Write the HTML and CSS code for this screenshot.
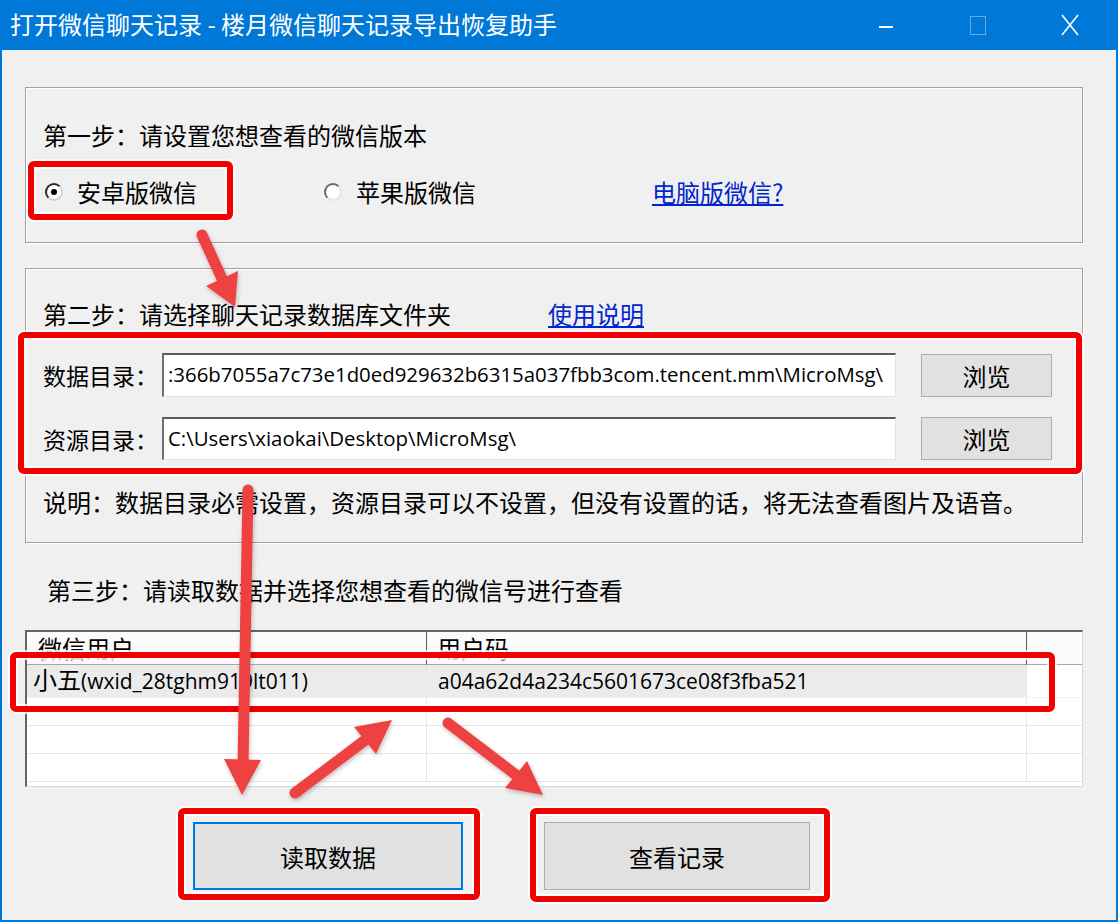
FILE: index.html
```html
<!DOCTYPE html>
<html>
<head>
    <meta charset="utf-8">
    <link rel="stylesheet" href="styles.css">
</head>
<body>
    <div class="window">
        <div class="titlebar">
            <span class="title">打开微信聊天记录 - 楼月微信聊天记录导出恢复助手</span>
            <div class="caption-buttons">
                <span class="cap"><i class="cap-min"></i></span>
                <span class="cap"><i class="cap-max"></i></span>
                <span class="cap">
                    <svg width="20" height="22" viewBox="0 0 20 22"><path d="M2 1 L18 21 M18 1 L2 21" stroke="#fff" stroke-width="1.6" fill="none"/></svg>
                </span>
            </div>
        </div>

        <div class="client">
            <div class="group group-version">
                <div class="step-title">第一步：请设置您想查看的微信版本</div>
                <div class="radio-row">
                    <label class="radio radio-android"><span class="radio-dot checked"></span>安卓版微信</label>
                    <label class="radio radio-ios"><span class="radio-dot"></span>苹果版微信</label>
                    <a class="link" href="#">电脑版微信?</a>
                </div>
            </div>

            <div class="group group-folder">
                <div class="step-head">
                    <span class="step-title step-title-wide">第二步：请选择聊天记录数据库文件夹</span>
                    <a class="link" href="#">使用说明</a>
                </div>
                <div class="field field-data">
                    <span class="field-label">数据目录：</span>
                    <div class="edit">:366b7055a7c73e1d0ed929632b6315a037fbb3com.tencent.mm\MicroMsg\</div>
                    <button class="btn-browse">浏览</button>
                </div>
                <div class="field field-res">
                    <span class="field-label">资源目录：</span>
                    <div class="edit">C:\Users\xiaokai\Desktop\MicroMsg\</div>
                    <button class="btn-browse">浏览</button>
                </div>
                <div class="note">说明：数据目录必需设置，资源目录可以不设置，但没有设置的话，将无法查看图片及语音。</div>
            </div>

            <div class="step3">第三步：请读取数据并选择您想查看的微信号进行查看</div>

            <div class="list">
                <div class="list-row list-header">
                    <div class="cell head-user">微信用户</div>
                    <div class="cell head-code">用户码</div>
                    <div class="cell cell-fill"></div>
                </div>
                <div class="list-row row-selected">
                    <div class="cell cell-user"><span class="cjk">小五</span>(wxid_28tghm919lt011)</div>
                    <div class="cell cell-code">a04a62d4a234c5601673ce08f3fba521</div>
                    <div class="cell cell-fill"></div>
                </div>
                <div class="list-row row-empty">
                    <div class="cell"></div><div class="cell"></div><div class="cell cell-fill"></div>
                </div>
                <div class="list-row row-empty">
                    <div class="cell"></div><div class="cell"></div><div class="cell cell-fill"></div>
                </div>
                <div class="list-row row-empty">
                    <div class="cell"></div><div class="cell"></div><div class="cell cell-fill"></div>
                </div>
            </div>

            <div class="actions">
                <button class="btn-big btn-read">读取数据</button>
                <button class="btn-big btn-view">查看记录</button>
            </div>
        </div>

        <!-- annotation layer: red boxes and arrows drawn over the dialog -->
        <svg class="marks" width="1118" height="922" viewBox="0 0 1118 922">
            <defs>
                <filter id="shadow" x="-20%" y="-20%" width="140%" height="140%">
                    <feDropShadow dx="1" dy="2" stdDeviation="2" flood-color="#000" flood-opacity="0.25"/>
                </filter>
            </defs>
            <g fill="none" stroke="#fff" stroke-width="10" stroke-linejoin="round" opacity="0.8">
                <rect x="31" y="164" width="199" height="53" rx="3"/>
                <rect x="21" y="335" width="1058" height="136" rx="3"/>
                <rect x="13" y="655" width="1039" height="54" rx="3"/>
                <rect x="181" y="811" width="296" height="86" rx="3"/>
                <rect x="533" y="811" width="294" height="88" rx="3"/>
            </g>
            <g fill="none" stroke="#f00000" stroke-width="6" stroke-linejoin="round">
                <rect x="31" y="164" width="199" height="53" rx="3"/>
                <rect x="21" y="335" width="1058" height="136" rx="3"/>
                <rect x="13" y="655" width="1039" height="54" rx="3"/>
                <rect x="181" y="811" width="296" height="86" rx="3"/>
                <rect x="533" y="811" width="294" height="88" rx="3"/>
            </g>
            <g filter="url(#shadow)">
                <g stroke="#ee4242" stroke-width="11" stroke-linecap="round" fill="none">
                    <line x1="202" y1="235" x2="224" y2="283"/>
                    <line x1="248" y1="490" x2="243" y2="765"/>
                    <line x1="295" y1="793" x2="368" y2="738"/>
                    <line x1="448" y1="723" x2="520" y2="778"/>
                </g>
                <g fill="#ee4242">
                    <polygon points="235,307 206,286 238,271"/>
                    <polygon points="242,795 224,759 261,760"/>
                    <polygon points="392,720 376,754 354,727"/>
                    <polygon points="543,795 505,788 527,761"/>
                </g>
            </g>
        </svg>
    </div>
</body>
</html>
```

FILE: styles.css
```css
body {
    margin: 0;
    font-family: "Noto Sans CJK SC", sans-serif;
    background: #fff;
}
.window {
    position: relative;
    width: 1118px;
    height: 922px;
    overflow: hidden;
}
.titlebar {
    height: 50px;
    background: #0078d7;
    display: flex;
    align-items: center;
    color: #fff;
}
.title {
    padding-left: 10px;
    font-size: 24px;
    line-height: 30px;
    margin-top: -2px;
}
.caption-buttons {
    margin-left: auto;
    display: flex;
    padding-right: 2px;
}
.cap {
    width: 92px;
    height: 50px;
    display: flex;
    align-items: center;
    justify-content: center;
}
.cap-min {
    width: 14px;
    height: 2px;
    background: #fff;
    margin-top: 4px;
}
.cap-max {
    width: 16px;
    height: 19px;
    border: 1px solid #6ba6dd;
    box-sizing: border-box;
}
.client {
    height: 872px;
    box-sizing: border-box;
    background: #f0f0f0;
    border: 2px solid #0078d7;
    border-top: none;
    padding: 0 33px 0 23px;
    overflow: hidden;
}
.group {
    box-sizing: border-box;
    border: 1px solid #a0a0a0;
    box-shadow: inset 1px 1px 0 #fff, 1px 1px 0 #fff;
    padding-left: 17px;
}
.group-version {
    margin-top: 37px;
    height: 156px;
    padding-top: 32px;
}
.group-folder {
    margin-top: 25px;
    height: 275px;
    padding-top: 30px;
}
.step-title {
    font-size: 24px;
    line-height: 30px;
    height: 30px;
    color: #000;
}
.radio-row {
    margin-top: 27px;
    height: 30px;
    display: flex;
    align-items: center;
}
.radio {
    display: flex;
    align-items: center;
    font-size: 24px;
    line-height: 30px;
}
.radio-android {
    margin-left: 2px;
    width: 279px;
}
.radio-ios {
    width: 328px;
}
.radio-dot {
    flex: 0 0 18px;
    width: 18px;
    height: 18px;
    box-sizing: border-box;
    border-radius: 50%;
    background: #fff;
    border: 2px solid #6a6a6a;
    border-right-color: #e4e4e4;
    border-bottom-color: #e4e4e4;
    margin-right: 14px;
    display: flex;
    align-items: center;
    justify-content: center;
}
.radio-dot.checked {
    border-color: #2a2a2a;
    border-right-color: #d4d4d4;
    border-bottom-color: #d4d4d4;
}
.radio-dot.checked::after {
    content: "";
    width: 6px;
    height: 6px;
    border-radius: 50%;
    background: #000;
}
.link {
    font-size: 24px;
    line-height: 30px;
    color: #0026cc;
    text-decoration: underline;
}
.step-head {
    display: flex;
    height: 30px;
}
.step-title-wide {
    width: 505px;
}
.field {
    display: flex;
    align-items: center;
}
.field-data {
    margin-top: 24px;
    height: 44px;
}
.field-res {
    margin-top: 20px;
    height: 43px;
}
.field-label {
    width: 119px;
    font-size: 23px;
    line-height: 30px;
    white-space: nowrap;
}
.edit {
    width: 734px;
    height: 100%;
    box-sizing: border-box;
    background: #fff;
    border-top: 2px solid #5a5a5a;
    border-left: 2px solid #6e6e6e;
    border-right: 1px solid #e4e4e4;
    border-bottom: 1px solid #e4e4e4;
    padding-left: 4px;
    font-family: "Open Sans", "Noto Sans CJK SC", sans-serif;
    font-size: 20.4px;
    line-height: 38px;
    white-space: nowrap;
    overflow: hidden;
    color: #000;
}
.btn-browse {
    margin-left: 25px;
    width: 131px;
    height: 43px;
    background: #e1e1e1;
    border: 1px solid #adadad;
    font-family: "Noto Sans CJK SC", sans-serif;
    font-size: 24px;
    color: #000;
    padding: 0;
}
.note {
    margin-top: 27px;
    font-size: 24px;
    line-height: 30px;
    white-space: nowrap;
}
.step3 {
    margin: 32px 0 0 22px;
    font-size: 24px;
    line-height: 30px;
    height: 30px;
}
.list {
    margin-top: 25px;
    width: 1058px;
    height: 157px;
    box-sizing: border-box;
    background: #fff;
    border-top: 2px solid #646464;
    border-left: 2px solid #646464;
    border-right: 1px solid #d9d9d9;
    border-bottom: 1px solid #d9d9d9;
    overflow: hidden;
}
.list-row {
    display: grid;
    grid-template-columns: 400px 600px 1fr;
}
.cell {
    box-sizing: border-box;
    border-right: 1px solid #e6e6e6;
    border-bottom: 1px solid #e6e6e6;
    white-space: nowrap;
    overflow: hidden;
}
.cell-fill {
    border-right: none;
}
.list-header {
    height: 33px;
}
.list-header .cell {
    background: #fbfbfb;
    border-bottom: 1px solid #a8a8a8;
    border-right: 1px solid #5c5c5c;
    font-size: 24px;
    line-height: 32px;
}
.list-header .cell-fill {
    border-right: none;
}
.head-user {
    padding-left: 11px;
}
.head-code {
    padding-left: 10px;
}
.row-selected {
    height: 33px;
}
.row-selected .cell {
    background: #ebebeb;
    font-family: "Open Sans", "Noto Sans CJK SC", sans-serif;
    font-size: 21px;
    line-height: 32px;
    border-bottom-color: #f2f2f2;
}
.row-selected .cell-fill {
    background: #fff;
}
.cjk {
    font-family: "Noto Sans CJK SC", sans-serif;
    font-size: 24px;
    line-height: 1;
}
.cell-user {
    padding-left: 6px;
}
.cell-code {
    padding-left: 11px;
}
.row-empty {
    height: 28px;
}
.actions {
    margin-top: 35px;
    display: flex;
}
.btn-big {
    height: 68px;
    background: #e1e1e1;
    border: 1px solid #adadad;
    font-family: "Noto Sans CJK SC", sans-serif;
    font-size: 24px;
    color: #000;
    padding: 0;
}
.btn-read {
    margin-left: 168px;
    width: 270px;
    border: 2px solid #0078d7;
}
.btn-view {
    margin-left: 81px;
    width: 266px;
}
.marks {
    position: absolute;
    left: 0;
    top: 0;
    pointer-events: none;
}
```
